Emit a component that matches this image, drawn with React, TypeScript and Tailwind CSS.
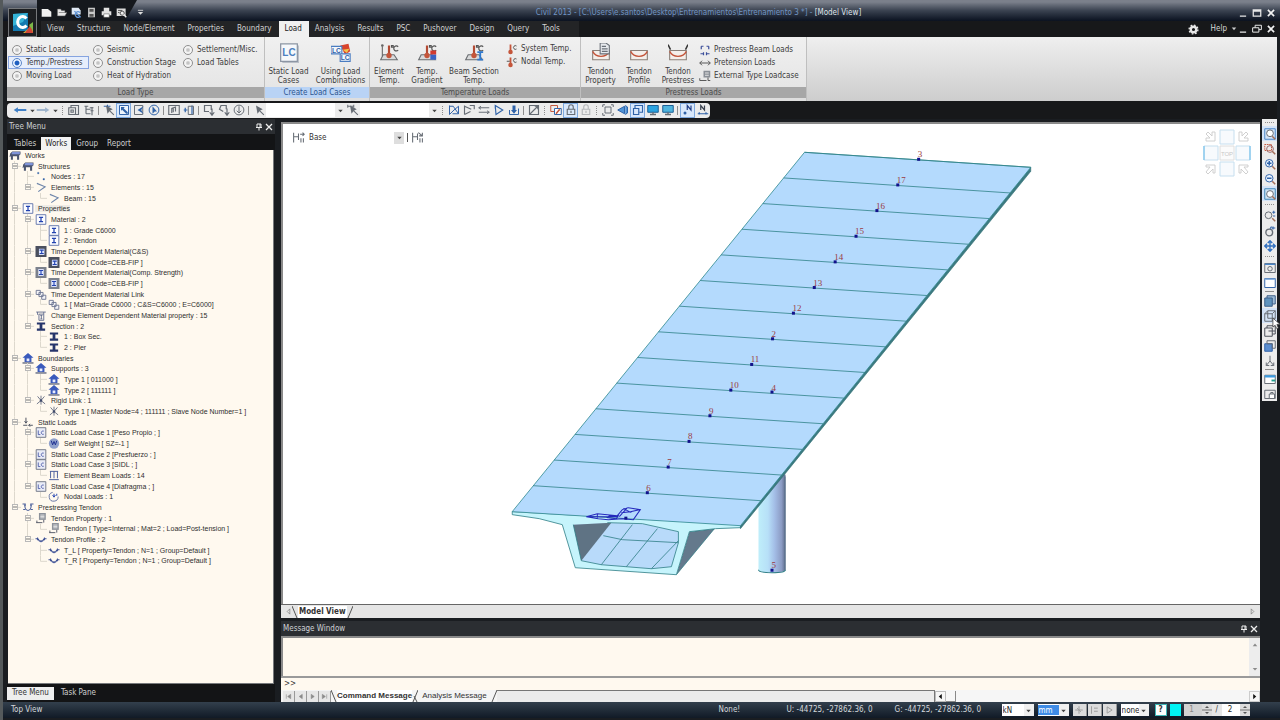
import { useState } from "react";
import type { ReactNode } from "react";
import clsx from "clsx";

const UI = "font-['DejaVu_Sans_Condensed','DejaVu_Sans',sans-serif]";
const ARIAL = "font-['Liberation_Sans',sans-serif]";

const B = "#2f62a8"; // blue ink used by most toolbar icons
const G = "#666c74"; // grey ink
const R = "#c4553a"; // tendon / temperature red

function Ico({ children, className = "h-[13px] w-[13px]", box = "0 0 16 16" }: { children: ReactNode; className?: string; box?: string }) {
  return (
    <svg viewBox={box} className={clsx("shrink-0", className)} fill="none" strokeWidth="1.3" aria-hidden="true">
      {children}
    </svg>
  );
}

/* ---------- title bar ---------- */

const QUICK: { label: string; icon: ReactNode }[] = [
  { label: "New", icon: <path d="M1 3h9l5 4v7H1z" fill="#f1f1f1" /> },
  { label: "Open", icon: <path d="M2 13V3h5l1 2h5v3h3l-3 5z M4 8h11" fill="#e8e8e8" stroke="#555" strokeWidth="0.8" /> },
  {
    label: "Open recent",
    icon: (
      <>
        <path d="M1 1h10l3 4v6H1z" fill="#dfe8f4" />
        <path d="M5 6l9 9M13 8a4 4 0 1 0 0 6" stroke="#5f93d4" strokeWidth="1.8" />
      </>
    ),
  },
  {
    label: "Save",
    icon: (
      <>
        <path d="M3 1h10v14H3z" fill="#c9c9c9" />
        <path d="M5 3h6v4H5zM5 10h6v4H5z" fill="#555" />
      </>
    ),
  },
  {
    label: "Print",
    icon: (
      <>
        <path d="M4 1h8v5H4zM1 6h14v6H1z" fill="#e2e2e2" />
        <path d="M4 10h8v5H4z" fill="#fff" stroke="#555" strokeWidth="0.8" />
      </>
    ),
  },
  {
    label: "Preview",
    icon: (
      <>
        <path d="M1 2h13v11H1z" fill="#ddd" />
        <path d="M3 5h6M3 8h2" stroke="#444" />
        <circle cx="9" cy="9" r="3" fill="#eee" stroke="#444" />
        <path d="M11 11l4 4" stroke="#eee" strokeWidth="2" />
      </>
    ),
  },
];

function WindowButtons({ restore }: { restore?: boolean }) {
  return (
    <div className="flex items-center gap-[3px]">
      <button type="button" aria-label="Minimize" className="flex h-3 w-[11px] items-center justify-center">
        <Ico className="h-[10px] w-[10px]">
          <path d="M3 13h10" stroke="#e8e8e8" strokeWidth="2" />
        </Ico>
      </button>
      <button type="button" aria-label="Restore" className="flex h-3 w-[11px] items-center justify-center">
        <Ico className="h-[10px] w-[10px]">
          {restore ? (
            <path d="M5 6V2h10v7h-4M1 6h10v7H1z" stroke="#e8e8e8" strokeWidth="1.6" />
          ) : (
            <path d="M2 3h12v10H2zM2 5h12" stroke="#e8e8e8" strokeWidth="2" />
          )}
        </Ico>
      </button>
      <button type="button" aria-label="Close" className="flex h-3 w-[11px] items-center justify-center">
        <Ico className="h-[10px] w-[10px]">
          <path d="M3 3l10 10M13 3L3 13" stroke="#f2f2f2" strokeWidth="2.6" />
        </Ico>
      </button>
    </div>
  );
}

const MENU = ["View", "Structure", "Node/Element", "Properties", "Boundary", "Load", "Analysis", "Results", "PSC", "Pushover", "Design", "Query", "Tools"];

function Header() {
  return (
    <header className="relative">
      <div className="flex h-[21px] items-center bg-linear-to-b from-[#7b808b] from-10% via-[#3b4351] via-50% to-[#0b1220] pr-1 pl-[34px]">
        <div className="flex h-full w-[100px] items-center gap-[2px] bg-[#15181d] pt-1 pl-[3px] [clip-path:polygon(0_0,100%_0,88%_100%,0_100%)]">
          {QUICK.map((q) => (
            <button key={q.label} type="button" aria-label={q.label} className="flex w-[13px] justify-center">
              <Ico className="h-[11px] w-[11px]">{q.icon}</Ico>
            </button>
          ))}
        </div>
        <button type="button" aria-label="Customize" className="pt-1">
          <Ico className="h-[7px] w-[7px]">
            <path d="M2 3h12" stroke="#ddd" strokeWidth="2" />
            <path d="M2 7h12l-6 6z" fill="#ddd" />
          </Ico>
        </button>
        <h1 className="flex-1 truncate pt-1 pl-4 text-center text-[8px] text-[#dfe3ea]">
          <span className="text-[#7195c4]">Civil 2013 - [C:\Users\e.santos\Desktop\Entrenamientos\Entrenamiento 3 *] -</span> [Model View]
        </h1>
        <div className="pt-1">
          <WindowButtons />
        </div>
      </div>

      <div className="flex h-4 items-center justify-between bg-[#17181a] pr-1 pl-[38px]">
        <nav className="flex h-full bg-[#232426] pr-3">
          {MENU.map((m) => (
            <button
              key={m}
              type="button"
              className={clsx("h-full pr-[7px] pl-[6px] text-[8px]", m === "Load" ? "bg-[#f0f0f0] text-[#222]" : "text-[#d2d2d2]")}
            >
              {m}
            </button>
          ))}
        </nav>
        <div className="flex items-center gap-1 text-[8px] text-[#d8d8d8]">
          <button type="button" aria-label="Options" className="mr-2">
            <Ico className="h-[11px] w-[11px]">
              <circle cx="8" cy="8" r="4" stroke="#e8e8e8" strokeWidth="3.4" />
              <circle cx="8" cy="8" r="6.4" stroke="#e8e8e8" strokeWidth="2" strokeDasharray="2.5 2.5" />
            </Ico>
          </button>
          <div className="flex items-center">
            <button type="button" className="flex items-center gap-1">
              Help
              <Ico className="h-[6px] w-[6px]">
                <path d="M2 4h12l-6 7z" fill="#ccc" />
              </Ico>
            </button>
            <WindowButtons restore />
          </div>
        </div>
      </div>

      {/* application button */}
      <button type="button" aria-label="Application menu" className="absolute top-2 left-[5px] flex h-[29px] w-[29px] items-center justify-center border border-[#77797c] bg-[#1d1f22]">
        <svg viewBox="0 0 24 24" className="h-6 w-6" aria-hidden="true">
          <path d="M2 3l15-1v18L2 20z" fill="#1379b0" />
          <path d="M2 3l15-1-5 9-10 4z" fill="#35b3d6" />
          <path d="M12 22l10-8v8z" fill="#d6b93a" />
          <path d="M14 22l6-9 2 9z" fill="#cf4436" />
          <path d="M18 14l4-3v9z" fill="#7cb648" />
          <path d="M15.500 7.500A5 5.500 0 1 0 15.500 14.500" fill="none" stroke="#fff" strokeWidth="3" />
        </svg>
      </button>
    </header>
  );
}

/* ---------- ribbon ---------- */

const LOAD_TYPES = [
  ["Static Loads", "Temp./Prestress", "Moving Load"],
  ["Seismic", "Construction Stage", "Heat of Hydration"],
  ["Settlement/Misc.", "Load Tables"],
];

const thermo = (
  <>
    <path d="M2 20l3-6h13l4 6z" fill="#d9dadb" stroke="#6a6d70" />
    <path d="M12 3v11" stroke="#b34a33" strokeWidth="2.6" />
    <circle cx="12" cy="15" r="3.2" fill="#c4553a" />
    <path d="M15 3h2v2h-2zM23 4.500a3 3 0 1 0 0 4" stroke="#555" strokeWidth="1.400" />
  </>
);

const tendonBox = (
  <>
    <path d="M2 9h20v11H2z" fill="#f4efea" stroke="#8a8078" />
    <path d="M2 10c4 8 16 8 20 0" stroke={R} strokeWidth="1.600" />
  </>
);

function LcBadge() {
  return (
    <>
      <path d="M2 1h20v21H2z" fill="#f6f8fb" stroke="#8c95a3" strokeWidth="1.500" />
      <path d="M23.500 3v20.500H4" stroke="#b9bec6" />
      <text x="12" y="16" textAnchor="middle" fontSize="12" fill="#4d80c0" fontFamily="Liberation Sans" fontWeight="700">
        LC
      </text>
    </>
  );
}

function BigButton({ lines, icon, width }: { lines: [string, string]; icon: ReactNode; width: string }) {
  return (
    <button type="button" className={clsx("flex flex-col items-center pt-[6px] text-[8px] leading-[9px] text-[#3c3c3c]", width)}>
      <Ico className="h-5 w-5" box="0 0 24 24">
        {icon}
      </Ico>
      <span className="mt-1 whitespace-nowrap">{lines[0]}</span>
      <span className="whitespace-nowrap">{lines[1]}</span>
    </button>
  );
}

function SmallButton({ label, icon }: { label: string; icon: ReactNode }) {
  return (
    <button type="button" className="flex h-[13px] items-center gap-[3px] text-[8px] whitespace-nowrap text-[#3c3c3c]">
      <Ico className="h-3 w-3">{icon}</Ico>
      {label}
    </button>
  );
}

function RibbonGroup({ title, active, children }: { title: string; active?: boolean; children: ReactNode }) {
  return (
    <section className="flex flex-col border-r border-[#bfbfbf]">
      <div className="flex h-[50px] bg-linear-to-b from-[#f0f0f0] to-[#e6e6e6]">{children}</div>
      <h2 className={clsx("h-[11px] text-center text-[8px] leading-[11px]", active ? "bg-[#b9d3f5] text-[#2c5590]" : "bg-[#a7a7a7] text-[#4a4a4a]")}>{title}</h2>
      <div className="flex-1 bg-[#dedede]" />
    </section>
  );
}

function Ribbon() {
  const [type, setType] = useState("Temp./Prestress");

  return (
    <div className="flex h-16 overflow-hidden bg-linear-to-b from-[#efefef] to-[#cdcdcd]">
      <RibbonGroup title="Load Type">
        <fieldset className="flex w-[257px] pt-[6px] pl-px">
          {LOAD_TYPES.map((col, i) => (
            <div key={i} className={clsx("flex flex-col", i === 0 ? "w-[81px]" : i === 1 ? "w-[90px]" : "w-[84px]")}>
              {col.map((name) => (
                <label
                  key={name}
                  className={clsx(
                    "flex h-[13px] items-center gap-1 border px-[3px] text-[8px] whitespace-nowrap text-[#3c3c3c]",
                    type === name ? "border-[#86a4e0] bg-[#e6eefc]" : "border-transparent"
                  )}
                >
                  <input
                    type="radio"
                    name="load-type"
                    checked={type === name}
                    onChange={() => setType(name)}
                    className="h-[10px] w-[10px] shrink-0 appearance-none rounded-full border border-[#8f8f8f] bg-[radial-gradient(circle,#c4c4c4_20%,#f4f4f4_45%)] checked:border-[#5c87c8] checked:bg-[radial-gradient(circle,#1f5fc0_35%,#e8f1ff_50%)]"
                  />
                  {name}
                </label>
              ))}
            </div>
          ))}
        </fieldset>
      </RibbonGroup>

      <RibbonGroup title="Create Load Cases" active>
        <BigButton width="w-[47px]" lines={["Static Load", "Cases"]} icon={<LcBadge />} />
        <BigButton
          width="w-[57px]"
          lines={["Using Load", "Combinations"]}
          icon={
            <>
              <path d="M11 3l10-2 2 9-6 4z" fill="#d8432c" />
              <path d="M14 8l8-1-3 5z" fill="#f2c14b" />
              <path d="M0 4h13v9H0zM11 13h12v9H11z" fill="#f4f7fb" stroke="#4a7cc0" />
              <text x="6.500" y="11.500" textAnchor="middle" fontSize="8" fontWeight="700" fill={B} fontFamily="Liberation Sans">
                LC
              </text>
              <text x="17" y="20.500" textAnchor="middle" fontSize="8" fontWeight="700" fill={B} fontFamily="Liberation Sans">
                LC
              </text>
            </>
          }
        />
      </RibbonGroup>

      <RibbonGroup title="Temperature Loads">
        <BigButton
          width="w-[38px]"
          lines={["Element", "Temp."]}
          icon={
            <>
              {thermo}
              <path d="M4 4v12" stroke="#666" />
              <circle cx="4" cy="3" r="1.600" fill="#666" />
            </>
          }
        />
        <BigButton
          width="w-[38px]"
          lines={["Temp.", "Gradient"]}
          icon={
            <>
              {thermo}
              <path d="M16 9h7v5h-7z" fill="#d23a30" />
              <path d="M16 14h7v6h-7z" fill="#3a62c4" />
            </>
          }
        />
        <BigButton
          width="w-[56px]"
          lines={["Beam Section", "Temp."]}
          icon={
            <>
              {thermo}
              <path d="M16 11h7M16 20h7M19.500 11v9" stroke="#2f79cf" strokeWidth="2.200" />
            </>
          }
        />
        <div className="flex w-[78px] flex-col pt-[5px] pl-1">
          <SmallButton
            label="System Temp."
            icon={
              <>
                <path d="M6 2v9" stroke={R} strokeWidth="2.400" />
                <circle cx="6" cy="12" r="3" fill={R} />
                <path d="M14 4a2.500 2.500 0 1 0 0 4" stroke="#555" />
              </>
            }
          />
          <SmallButton
            label="Nodal Temp."
            icon={
              <>
                <path d="M6 2v9" stroke={R} strokeWidth="2.400" />
                <circle cx="6" cy="12" r="3" fill={R} />
                <path d="M1 7h4M14 4a2.500 2.500 0 1 0 0 4" stroke="#555" />
              </>
            }
          />
        </div>
      </RibbonGroup>

      <RibbonGroup title="Prestress Loads">
        <BigButton
          width="w-[39px]"
          lines={["Tendon", "Property"]}
          icon={
            <>
              {tendonBox}
              <path d="M11 0h7l4 3v10H11z" fill="#e6e9ed" stroke="#6a7078" />
              <path d="M13 4h5M13 7h7M13 10h7" stroke="#6a7078" />
            </>
          }
        />
        <BigButton width="w-[38px]" lines={["Tendon", "Profile"]} icon={tendonBox} />
        <BigButton
          width="w-10"
          lines={["Tendon", "Prestress"]}
          icon={
            <>
              {tendonBox}
              <path d="M3 8L0 2M21 8l3-6" stroke="#333" strokeWidth="1.800" />
            </>
          }
        />
        <div className="flex w-[108px] flex-col pt-[6px] pl-px">
          <SmallButton
            label="Prestress Beam Loads"
            icon={<path d="M3 3v4M3 3h3M13 3v4M13 3h-3M2 13h4M14 13h-4M6 11v4M10 11v4" stroke="#3b4e9a" strokeWidth="1.600" />}
          />
          <SmallButton label="Pretension Loads" icon={<path d="M1 8h14M4 5L1 8l3 3M12 5l3 3-3 3" stroke="#555" />} />
          <SmallButton
            label="External Type Loadcase"
            icon={
              <>
                <path d="M6 1h9v9H6z" fill="#8a8f96" />
                <path d="M8 4h5M8 7h5" stroke="#e6e6e6" />
                <path d="M1 14h9M12 10v4h3M1 11v3" stroke="#555" />
              </>
            }
          />
        </div>
      </RibbonGroup>
    </div>
  );
}

/* ---------- icon toolbar ---------- */

const cursor = <path d="M4 2l2 11 2.500-3.500L14 15l1-1-5.500-5.500L13 7z" fill={G} />;

type Tool = { kind: "icon"; label: string; icon: ReactNode; active?: boolean } | { kind: "sep" } | { kind: "grip" } | { kind: "select"; label: string };

const SEP: Tool = { kind: "sep" };
const GRIP: Tool = { kind: "grip" };
const t = (label: string, icon: ReactNode, active = false): Tool => ({ kind: "icon", label, icon, active });

const TOOLS: Tool[] = [
  GRIP,
  t("Select by property", <path d="M1 5h9v9H1zM4 5V2h10v12h-4M4 8h3v3H4z" stroke={G} strokeWidth="1.500" />),
  t("Group tree", <path d="M2 3h5M4 3v10M4 7h6M4 13h6M12 4v11M9 5h5M10 9h4" stroke={G} strokeWidth="1.500" />),
  SEP,
  t("Select single", <><path d="M1 3h9M6 1v6" stroke={B} />{cursor}</>),
  t("Select window", <><path d="M2 2h12v12H2z" fill="#eef5fd" stroke={B} /><path d="M4 4h5L7.500 5.500 13 11v2h-2L5.500 7.500 4 9z" fill={B} /></>, true),
  t("Select polygon", <><path d="M2 2h11v12H2z" stroke={G} /><path d="M14 3L6 8l8 5-3-5z" fill={B} /></>),
  t("Select intersect", <><circle cx="8" cy="8" r="6.500" stroke={B} /><path d="M6 3l6 7H9l-3 3z" fill={B} /></>),
  SEP,
  t("Select plane", <path d="M1 2h14v12H1zM5 12V6l5-2v6M7 5v6" stroke={G} strokeWidth="1.500" />),
  t("Select volume", <><path d="M1 8h5M3 5v6M12 2v12" stroke={B} strokeWidth="1.600" /><path d="M7 3h7v11H7z" stroke={G} /></>),
  SEP,
  t("Unselect window", <path d="M8 10H2V2h9v6M12 6v8M9 11l3 4 3-4" stroke={G} strokeWidth="1.600" />),
  t("Unselect polygon", <path d="M7 10L2 7l2-5h7v5M12 6v8M9 11l3 4 3-4" stroke={G} strokeWidth="1.600" />),
  t("Unselect intersect", <><circle cx="8" cy="8" r="6.500" stroke={G} /><path d="M8 3v9M5 9l3 3 3-3" stroke={G} /></>),
  SEP,
  t("Select nodes", cursor),
  { kind: "select", label: "Node list" },
  t("Select elements", <><path d="M1 3h8M1 1v4M9 1v4" stroke={G} />{cursor}</>),
  { kind: "select", label: "Element list" },
  GRIP,
  t("Activate", <path d="M2 2v12M2 14l6-6 6-5M14 3v10H6M2 3h5l7 10" stroke={B} />),
  t("Inactivate", <path d="M2 2v12M2 14l8-4M2 3l9 4M9 2h6v5" stroke={G} strokeWidth="1.500" />),
  t("Inverse", <path d="M1 5h14M1 11h14M4 3L1 5l3 2M12 9l3 2-3 2" stroke={G} />),
  t("Activate all", <path d="M3 2l10 6-9 6zM3 2v4" stroke={B} strokeWidth="1.500" />),
  t("Previous", <><path d="M2 8v6h12V6" stroke={B} /><path d="M4 8l4 5 4-5-2 0V2H6v6z" fill={B} /></>),
  SEP,
  t("Redraw", <path d="M2 2h12v12H2zM2 14L14 2M9 3h4v4" stroke={G} strokeWidth="1.500" />),
  GRIP,
  t("Stage", <><path d="M1 2h9v8H1z" stroke={R} /><path d="M6 6h9v8H6z" fill="#fff" stroke={B} /><path d="M8 13l5-6" stroke={R} strokeWidth="2" /></>),
  t("Lock", <path d="M3 7h10v7H3zM5 7V4a3 3 0 0 1 6 0v3M8 9v3" stroke={G} strokeWidth="1.500" />, true),
  t("Unlock", <path d="M3 7h10v7H3zM5 7V4a3 3 0 0 1 6 0v3M8 9v3" stroke="#b4b6b9" strokeWidth="1.500" />),
  GRIP,
  t("Initial view", <path d="M4 4h8v8H4zM1 4V1h3M12 1h3v3M15 12v3h-3M4 15H1v-3" stroke={G} />),
  t("Perspective", <path d="M1 8l9-5v10zM11 2l3 2v8l-3 2" fill="#4f93d6" stroke={B} />),
  t("Shrink", <path d="M4 6V2h10v9h-4M2 6h7v8H2z" stroke={B} strokeWidth="1.500" />, true),
  t("Hidden", <><path d="M1 2h14v9H1z" fill="#2aa3e0" stroke="#1a5b92" /><path d="M4 14h8M8 11v3" stroke={G} strokeWidth="1.800" /></>),
  t("Display", <><path d="M1 2h14v9H1z" fill="#4fb4dd" stroke="#1a5b92" /><path d="M4 14h8M8 11v3" stroke={G} strokeWidth="1.800" /></>),
  SEP,
  t("Node number", <><path d="M7 8V2l5 6V2" stroke="#23408a" strokeWidth="1.600" /><circle cx="4" cy="12" r="2" fill={B} /></>, true),
  t("Element number", <><path d="M5 8V2l5 6V2" stroke="#3a4250" strokeWidth="1.600" /><path d="M1 13h14M3 11v3M12 11v3" stroke={B} strokeWidth="1.600" /></>),
];

function Caret() {
  return (
    <Ico className="h-[7px] w-[7px]" box="0 0 8 8">
      <path d="M1.500 3h5L4 6z" fill="#444" />
    </Ico>
  );
}

function NavArrow({ label, dir, color }: { label: string; dir: "l" | "r"; color: string }) {
  return (
    <button type="button" aria-label={label} className="flex w-[23px] items-center gap-[2px]">
      <Ico className="h-[10px] w-[14px]" box="0 0 20 12">
        <path d={dir === "l" ? "M1 6l6-4v2.500h12v3H7V10z" : "M19 6l-6-4v2.500H1v3h12V10z"} fill={color} />
      </Ico>
      <Caret />
    </button>
  );
}

function Toolbar() {
  return (
    <div className="flex h-[18px] bg-[#17181a]">
      <div className="flex h-[15px] items-center self-center rounded-sm bg-[#ececec] pl-[6px]">
        <NavArrow label="Undo" dir="l" color="#3f7fc6" />
        <NavArrow label="Redo" dir="r" color="#9fb4cc" />
        {TOOLS.map((x, i) => {
          if (x.kind === "sep") return <span key={i} className="mx-[2px] h-[9px] w-px bg-[#8d8d8d]" />;
          if (x.kind === "grip") return <span key={i} className="mx-[3px] h-[9px] w-px border-l border-dotted border-[#8d8d8d]" />;
          if (x.kind === "select")
            return (
              <span key={i} className="relative flex h-[14px] w-[79px] items-center">
                <select aria-label={x.label} className="h-full w-full appearance-none bg-white text-[8px]" />
                <span className="pointer-events-none absolute right-0 flex h-full w-[10px] items-center justify-center bg-[#ececec]">
                  <Caret />
                </span>
              </span>
            );
          return (
            <button
              key={i}
              type="button"
              aria-label={x.label}
              className={clsx("flex h-[15px] w-[15px] items-center justify-center", x.active && "border border-[#7fa9de] bg-[#d9e8fb]")}
            >
              <Ico className="h-3 w-3">{x.icon}</Ico>
            </button>
          );
        })}
      </div>
    </div>
  );
}

/* ---------- tree panel ---------- */

const treeIcons: Record<string, ReactNode> = {
  works: (
    <>
      <path d="M1 5l3-3h12v4l-2 2v6h-3V9H5v5H2V9L0 10z" fill="#4b5570" />
      <path d="M4 3h11v3H3z" fill="#7f93d8" />
    </>
  ),
  nodes: <path d="M3 2h2v2H3zM11 11h2v2h-2z" fill={B} stroke={B} strokeWidth="0.500" />,
  elements: <path d="M2 2l12 5-10 7" stroke="#6f86ab" strokeWidth="1.600" />,
  mat: (
    <>
      <path d="M1 1h14v14H1z" fill="#fdfdff" stroke="#5b6fa8" />
      <path d="M5 5h6M5 11h6M8 5v6" stroke="#2343b0" strokeWidth="1.800" />
    </>
  ),
  matDark: (
    <>
      <path d="M0 0h16v16H0z" fill="#4a4f5e" />
      <path d="M5 4h8v9H5z" fill="#dfe6ff" />
      <path d="M6 6h6M6 11h6M9 6v5" stroke="#2343b0" strokeWidth="1.600" />
    </>
  ),
  matMid: (
    <>
      <path d="M0 0h16v16H0z" fill="#7c818c" />
      <path d="M4 3h8v10H4z" fill="#dfe6ff" />
      <path d="M5 5h6M5 11h6M8 5v6" stroke="#2343b0" strokeWidth="1.600" />
    </>
  ),
  link: <path d="M1 2h6v6H1zM5 5h6v6H5zM9 9h6v6H9z" fill="#f4f4f8" stroke="#6b7490" />,
  change: <path d="M1 3h14M3 3v4M12 3v3M5 6h7v9H5zM7 8h3M7 13h3M8.500 8v5" stroke="#5f6a8c" />,
  section: <path d="M2 2h12v3H10v6h4v3H2v-3h4V5H2z" fill="#26356b" />,
  support: (
    <>
      <path d="M8 0l8 7h-3v6H3V7H0z" fill="#3a5abc" />
      <path d="M6 8h4v4H6z" fill="#e8edff" />
      <path d="M0 14.500h16" stroke="#3a4466" strokeWidth="1.600" />
    </>
  ),
  rigid: (
    <>
      <path d="M8 8L3 2M8 8l5-6M8 8l-6 5M8 8l6 5M8 8V1M8 8v6" stroke="#59617a" strokeWidth="1.200" />
      <circle cx="8" cy="8" r="1.800" fill="#3f4a6a" />
    </>
  ),
  loads: <path d="M5 1v7M3 6l2 3 2-3M1 12h6M15 12H9M11 10l-2 2 2 2" stroke="#4a4f5e" strokeWidth="1.400" />,
  lc: (
    <>
      <path d="M1 1h14v14H1z" fill="#e9ebf6" stroke="#6a7080" />
      <path d="M4 5v6h3M12 6a2.500 2.500 0 1 0 0 4.500" stroke="#4a5aa8" strokeWidth="1.300" />
    </>
  ),
  weight: (
    <>
      <circle cx="8" cy="8" r="7.500" fill="#8fa0cc" />
      <path d="M4 4l2 6 2-5 2 5 2-6" stroke="#1e2f90" strokeWidth="1.400" />
    </>
  ),
  beam: <path d="M2 2h12M3 2v10M8 2v10M13 2v10M1 14h14" stroke="#4c5f9c" strokeWidth="1.400" />,
  nodal: (
    <>
      <path d="M6 2a6.500 6.500 0 1 0 8 6" stroke="#5a6ba0" />
      <path d="M8 4v4M6 6l2 3 2-3M12 4v3" stroke="#2343b0" strokeWidth="1.400" />
    </>
  ),
  tendon: <path d="M0 3h4v3M16 3h-4v3M3 4c1 11 9 11 10 0M1 11h3M12 11h3" stroke="#4b5f9a" strokeWidth="1.500" />,
  tprop: (
    <>
      <path d="M5 0h10v10H5z" fill="#8d929b" />
      <path d="M7 3h6M7 5h6M7 7h6" stroke="#e8e8e8" />
      <path d="M1 14h9M2 11v3M12 10v4" stroke="#4a4f5e" />
    </>
  ),
  tprof: <path d="M0 7h4M12 7h4M3 5v4M13 5v4M4 7c1 5 7 5 8 0M8 9v3" stroke="#3f5296" strokeWidth="1.500" />,
};

type Row = { level: number; text: string; icon: string; open?: boolean };

const ROWS: Row[] = [
  { level: 0, text: "Works", icon: "works" },
  { level: 1, text: "Structures", icon: "works", open: true },
  { level: 2, text: "Nodes : 17", icon: "nodes" },
  { level: 2, text: "Elements : 15", icon: "elements", open: true },
  { level: 3, text: "Beam : 15", icon: "elements" },
  { level: 1, text: "Properties", icon: "mat", open: true },
  { level: 2, text: "Material : 2", icon: "mat", open: true },
  { level: 3, text: "1 : Grade C6000", icon: "mat" },
  { level: 3, text: "2 : Tendon", icon: "mat" },
  { level: 2, text: "Time Dependent Material(C&S)", icon: "matDark", open: true },
  { level: 3, text: "C6000 [ Code=CEB-FIP ]", icon: "matDark" },
  { level: 2, text: "Time Dependent Material(Comp. Strength)", icon: "matMid", open: true },
  { level: 3, text: "C6000 [ Code=CEB-FIP ]", icon: "matMid" },
  { level: 2, text: "Time Dependent Material Link", icon: "link", open: true },
  { level: 3, text: "1 [ Mat=Grade C6000 ; C&S=C6000 ; E=C6000]", icon: "link" },
  { level: 2, text: "Change Element Dependent Material property : 15", icon: "change" },
  { level: 2, text: "Section : 2", icon: "section", open: true },
  { level: 3, text: "1 : Box Sec.", icon: "section" },
  { level: 3, text: "2 : Pier", icon: "section" },
  { level: 1, text: "Boundaries", icon: "support", open: true },
  { level: 2, text: "Supports : 3", icon: "support", open: true },
  { level: 3, text: "Type 1 [ 011000 ]", icon: "support" },
  { level: 3, text: "Type 2 [ 111111 ]", icon: "support" },
  { level: 2, text: "Rigid Link : 1", icon: "rigid", open: true },
  { level: 3, text: "Type 1 [ Master Node=4 ; 111111 ; Slave Node Number=1 ]", icon: "rigid" },
  { level: 1, text: "Static Loads", icon: "loads", open: true },
  { level: 2, text: "Static Load Case 1 [Peso Propio ; ]", icon: "lc", open: true },
  { level: 3, text: "Self Weight [ SZ=-1 ]", icon: "weight" },
  { level: 2, text: "Static Load Case 2 [Presfuerzo ; ]", icon: "lc" },
  { level: 2, text: "Static Load Case 3 [SIDL ; ]", icon: "lc", open: true },
  { level: 3, text: "Element Beam Loads : 14", icon: "beam" },
  { level: 2, text: "Static Load Case 4 [Diafragma ; ]", icon: "lc", open: true },
  { level: 3, text: "Nodal Loads : 1", icon: "nodal" },
  { level: 1, text: "Prestressing Tendon", icon: "tendon", open: true },
  { level: 2, text: "Tendon Property : 1", icon: "tprop", open: true },
  { level: 3, text: "Tendon [ Type=Internal ; Mat=2 ; Load=Post-tension ]", icon: "tprop" },
  { level: 2, text: "Tendon Profile : 2", icon: "tprof", open: true },
  { level: 3, text: "T_L [ Property=Tendon ; N=1 ; Group=Default ]", icon: "tprof" },
  { level: 3, text: "T_R [ Property=Tendon ; N=1 ; Group=Default ]", icon: "tprof" },
];

// true when a later sibling sits at this level below row i
function continues(i: number, level: number) {
  for (let j = i + 1; j < ROWS.length; j++) {
    if (ROWS[j].level < level) return false;
    if (ROWS[j].level === level) return true;
  }
  return false;
}

function Guide({ index, level }: { index: number; level: number }) {
  const row = ROWS[index];
  const own = row.level === level;
  const more = continues(index, level);
  return (
    <svg className="h-full w-[13px] shrink-0" stroke="#ddd8cd" aria-hidden="true">
      {(own || more) && <line x1="6.500" x2="6.500" y1="0" y2={more ? "100%" : "50%"} />}
      {own && <line x1="6.500" x2="13" y1="50%" y2="50%" />}
      {own && row.open && (
        <>
          <rect x="4.500" y="2.500" width="5" height="5" fill="#fffaf0" stroke="#b9b9b9" />
          <path d="M5 5h4" stroke="#777" />
        </>
      )}
    </svg>
  );
}

function PanelTitle({ children }: { children: ReactNode }) {
  return (
    <div className="flex h-[15px] items-center justify-between bg-[#2b2e32] px-[2px] text-[8px] text-[#cfd1d4]">
      <h2>{children}</h2>
      <div className="flex gap-[2px]">
        <button type="button" aria-label="Pin">
          <Ico className="h-2 w-2">
            <path d="M4 2h8v7H4zM2 9h12M8 9v6M10 2v7" stroke="#eee" strokeWidth="2" />
          </Ico>
        </button>
        <button type="button" aria-label="Close">
          <Ico className="h-2 w-2">
            <path d="M2 2l12 12M14 2L2 14" stroke="#eee" strokeWidth="2.600" />
          </Ico>
        </button>
      </div>
    </div>
  );
}

function TreePanel() {
  const [tab, setTab] = useState("Works");

  return (
    <aside className="flex w-[268px] shrink-0 flex-col">
      <PanelTitle>Tree Menu</PanelTitle>
      <div className="flex h-4 items-end gap-px bg-[#131416] pl-[3px]">
        {["Tables", "Works", "Group", "Report"].map((name) => (
          <button
            key={name}
            type="button"
            onClick={() => setTab(name)}
            className={clsx("h-[13px] px-1 text-[8px]", tab === name ? "bg-[#f2f2f2] text-[#222]" : "text-[#cfcfcf]")}
          >
            {name}
          </button>
        ))}
      </div>
      <div className="mx-px flex-1 overflow-hidden border-r border-b border-[#77797c] bg-[#fff9ef]">
        <ul className={clsx("flex h-[416px] flex-col text-[7px] leading-none text-[#2e2e2e]", ARIAL)}>
          {ROWS.map((row, i) => (
            <li key={i} className="flex min-h-0 flex-1 items-center whitespace-nowrap">
              {Array.from({ length: row.level }, (_, n) => (
                <Guide key={n} index={i} level={n + 1} />
              ))}
              <Ico className="mx-px h-[11px] w-3">{treeIcons[row.icon]}</Ico>
              <span className={clsx("pl-[3px]", row.text === "Properties" && "bg-[#efece6]")}>{row.text}</span>
            </li>
          ))}
        </ul>
      </div>
      <div className="flex h-[18px] items-center bg-[#131416] text-[8px]">
        <button type="button" className="h-[13px] bg-[#eeeeee] px-[5px] text-[#333]">
          Tree Menu
        </button>
        <button type="button" className="px-[7px] text-[#cfcfcf]">
          Task Pane
        </button>
      </div>
    </aside>
  );
}

/* ---------- model view ---------- */

const NODES = [3, 17, 16, 15, 14, 13, 12, 2, 11, 10, 9, 8, 7, 6];
const DX = 20.85;
const DY = 25.62;

function BridgeModel() {
  return (
    <svg viewBox="284 124 976 479" className="block h-full w-full" role="img" aria-label="Bridge model">
      <defs>
        <linearGradient id="pier" x1="0" x2="1" y1="0" y2="0">
          <stop offset="0" stopColor="#bfeefa" />
          <stop offset="0.350" stopColor="#b7e0f8" />
          <stop offset="0.600" stopColor="#a3bde6" />
          <stop offset="0.850" stopColor="#8c9cc4" />
          <stop offset="1" stopColor="#5f6d8c" />
        </linearGradient>
      </defs>

      {/* pier */}
      <path d="M759 480v89c0 4 27 4 27 0v-95h-16z" fill="url(#pier)" />
      <path d="M759 569c0 4 27 4 27 0" fill="none" stroke="#2f7e86" />
      <path d="M785.500 476v93" stroke="#56708c" />

      {/* box girder end section */}
      <path d="M690 531l25-3-38 46z" fill="#64798c" />
      <path d="M690 531l25-3-38 46" fill="none" stroke="#2f7e86" strokeWidth="0.700" />
      <path d="M513 511v3l27 4 23 6 13 43 101 7 13-43 26-3 25-1v-3z" fill="#c6f4fc" stroke="#2f7e86" strokeWidth="0.800" />
      <path d="M574 524l37-2 32 1 36 8 0 11-7 24-20 2-50-4-20-4z" fill="#b8dafa" />
      <path d="M574 524l38-2-30 38z" fill="#5f7384" />
      <path
        d="M574 524l8 36 20 4 50 4 20-2 7-24v-11M602 564l31-40M627 566l31-38M652 568l27-28M604 535l19 4 56 3M608 522l35 1 36 8"
        fill="none"
        stroke="#2f7e86"
        strokeWidth="0.800"
      />

      {/* deck */}
      <path d="M1031 167v4L741 528v-3z" fill="#3d7a80" stroke="#2f6f76" strokeWidth="0.600" />
      <path d="M805 152l226 15-290 358-228-14z" fill="#b4dafd" stroke="#2f8a90" strokeWidth="0.800" />
      {NODES.map((n, k) => (
        <line key={n} x1={805 - DX * k} y1={152 + DY * k} x2={1031 - 20.75 * k} y2={167 + DY * k} stroke="#2f8288" strokeWidth="0.800" />
      ))}

      {/* axes glyph */}
      <path
        d="M587 516l11-3 20 2 5-6 6-2 12 2-7 10-11-1-14 1-10-1zM587 516l32 0M598 513l0 4M608 517l2-2 9 0-2 3zM622 512l9-1 9-2M624 508l8 4M620 516l8-9"
        fill="none"
        stroke="#2428bc"
        strokeWidth="1"
      />
      <rect x="625" y="516" width="3" height="3" fill="#12128c" />

      <g fontFamily="Liberation Serif" fontSize="9" fill="#9a3a42">
        {NODES.map((n, k) => (
          <g key={n}>
            <rect x={917.5 - DX * k} y={157.500 + DY * k} width="3" height="3" fill="#12128c" />
            <text x={918 - DX * k} y={157 + DY * k}>
              {n}
            </text>
          </g>
        ))}
        <rect x="771" y="390" width="3" height="3" fill="#12128c" />
        <text x="772" y="390">
          4
        </text>
        <rect x="771" y="568" width="3" height="3" fill="#12128c" />
        <text x="772" y="567">
          5
        </text>
      </g>
    </svg>
  );
}

function ViewCube() {
  return (
    <svg viewBox="0 0 48 48" className="absolute top-[5px] right-[9px] h-12 w-12" aria-label="View cube" role="img" fill="none">
      <g fill="#f7fafd" stroke="#c6dfef">
        <path d="M17 1h14v14H17zM1 17h14v14H1zM33 17h14v14H33zM17 33h14v14H17z" />
        <path d="M17 17h14v14H17z" stroke="#dedede" fill="#fbfbfb" />
      </g>
      <path d="M1 17v14M47 17v14" stroke="#8ccaee" strokeWidth="1.500" />
      {/* outlined corner arrows: the upper pair points in, the lower pair too */}
      <g fill="#fff" stroke="#cbcbcb" strokeWidth="0.900">
        <path d="M3 5l2-2 4 4V3h3v9H3V9h4z" />
        <path d="M45 5l-2-2-4 4V3h-3v9h9V9h-4z" />
        <path d="M3 43l2 2 5-5v4h2v-8H3v2h4z" />
        <path d="M45 43l-2 2-5-5v4h-2v-8h9v2h-4z" />
      </g>
      <text x="24" y="26.500" textAnchor="middle" fontSize="6" fill="#c8c8c8" fontFamily="Liberation Sans">
        TOP
      </text>
    </svg>
  );
}

function StageBar() {
  return (
    <div className="absolute top-[7px] left-[9px] flex items-center text-[8px] text-[#333]">
      <Ico className="h-[13px] w-[13px]">
        <path d="M2 2v12M2 7h6M8 3v8M10 4h5M13 2l2 2-2 2M11 9v5M14 9v5" stroke={G} />
      </Ico>
      <span className="relative flex w-[99px] items-center">
        <select aria-label="Stage" className="w-full appearance-none bg-white pl-1">
          <option>Base</option>
        </select>
        <span className="pointer-events-none absolute right-0 flex h-3 w-[10px] items-center justify-center bg-[#dedede]">
          <Caret />
        </span>
      </span>
      <span className="mx-[3px] h-[9px] w-px bg-[#555]" />
      <button type="button" aria-label="Define stage">
        <Ico className="h-[13px] w-[13px]">
          <path d="M2 2v12M2 7h6M8 3v8M9 2l5 4M14 2v4h-4M11 9v5M14 9v5" stroke={G} />
        </Ico>
      </button>
    </div>
  );
}

/* ---------- right toolbar ---------- */

const lens = <path d="M11 11l4 4" stroke="#a4705a" strokeWidth="2" />;

const SIDE: Tool[] = [
  GRIP,
  t("Zoom fit", <><path d="M1 1h14v14H1z" stroke="#4a86c8" /><circle cx="8" cy="7" r="4.500" fill="#fff" stroke={G} />{lens}</>, true),
  t("Zoom window", <><path d="M1 2h9v8H1z" stroke={R} strokeDasharray="2 1" /><circle cx="8" cy="8" r="4.500" stroke="#9a6a6a" />{lens}</>),
  t("Zoom in", <><circle cx="7" cy="7" r="5" fill="#eaf4ff" stroke={B} /><path d="M4 7h6M7 4v6" stroke={B} strokeWidth="2" />{lens}</>),
  t("Zoom out", <><circle cx="7" cy="7" r="5" fill="#eaf4ff" stroke={B} /><path d="M4 7h6" stroke={B} strokeWidth="2" />{lens}</>),
  t("Auto fitting", <><path d="M1 1h14v14H1z" fill="#cfe3f4" stroke="#3f86b8" /><circle cx="8" cy="8" r="4.500" fill="#fff" stroke={G} />{lens}</>, true),
  GRIP,
  t("Dynamic zoom", <><circle cx="6" cy="7" r="4.500" stroke={G} /><path d="M11 3h4M13 1v4M12 8h3" stroke={B} />{lens}</>),
  t("Dynamic rotate", <><circle cx="7" cy="10" r="4.500" stroke={G} strokeWidth="1.800" /><path d="M8 5l2-3M12 2v4M10 4h5" stroke={B} strokeWidth="1.500" /></>),
  t("Pan", <path d="M8 1v14M1 8h14M5 4l3-3 3 3M5 12l3 3 3-3M4 5L1 8l3 3M12 5l3 3-3 3" stroke="#2f6fc0" strokeWidth="1.800" />),
  GRIP,
  t("Fast query", <><path d="M1 2h14v12H1z" stroke={G} /><path d="M1 2h14v2H1z" fill="#4a86c8" /><circle cx="8" cy="9" r="3" stroke={G} /></>),
  t("Top view", <><path d="M1 2h14v12H1z" fill="#fff" stroke={B} /><path d="M1 2h14v2H1z" fill="#8db4e0" /></>),
  SEP,
  t("Iso view", <><path d="M4 1h11v11H4z" fill="#9dbbd6" stroke="#3c5e86" /><path d="M1 4h10v11H1z" fill="#5f93bd" stroke="#3c5e86" /></>),
  t("Wireframe", <path d="M1 5h10v10H1zM1 5l4-4h10v10l-4 4M11 5l4-4M5 1v10h10" stroke={G} />, true),
  t("Front view", <path d="M1 4h10v11H1zM4 4V1h11v11h-4M6 8h9" stroke="#4a4f58" />),
  t("Back view", <><path d="M1 5h10v10H1z" fill="#5b8ed0" stroke={B} /><path d="M4 1h11v10h-4V5H4z" stroke={G} /></>),
  t("Local axis", <path d="M8 1v7M8 8l-5 6M8 8l5 6M3 10v4h4M13 10v4H9" stroke={G} />),
  SEP,
  t("Capture", <><path d="M1 3h14v11H1z" fill="#fff" stroke={G} /><path d="M1 3h14v3H1z" fill="#3b9be0" /><path d="M10 10h5" stroke="#23a08e" strokeWidth="2.500" /></>),
  t("Lock view", <><path d="M1 3h14v11H1z" stroke={G} /><path d="M7 8h7v6H7zM9 8V6h3v2" fill="#fff" stroke={G} /></>),
];

function SideToolbar() {
  return (
    <div className="relative flex w-[15px] shrink-0 flex-col">
      <div className="flex flex-col items-center bg-[#ececec]">
        {SIDE.map((x, i) => {
          if (x.kind === "sep") return <span key={i} className="my-px h-px w-[9px] bg-[#8d8d8d]" />;
          if (x.kind !== "icon") return <span key={i} className="my-[3px] h-px w-[9px] border-t border-dotted border-[#8d8d8d]" />;
          return (
            <button
              key={i}
              type="button"
              aria-label={x.label}
              className={clsx("flex h-[15px] w-[15px] items-center justify-center", x.active && "bg-[#d3e3f7]")}
            >
              <Ico className="h-3 w-3">{x.icon}</Ico>
            </button>
          );
        })}
      </div>
      {/* mouse pointer resting on the bar */}
      <svg viewBox="0 0 10 14" className="absolute top-[198px] left-[10px] h-[13px] w-[9px]" aria-hidden="true">
        <path d="M1 1v10l2.500-2 2 4 1.500-1-1.500-4H9z" fill="#fff" stroke="#333" strokeWidth="0.800" />
      </svg>
    </div>
  );
}

/* ---------- message window ---------- */

function Slant({ d, fill }: { d: string; fill: string }) {
  return (
    <svg viewBox="0 0 6 12" className="h-3 w-[6px] shrink-0" preserveAspectRatio="none" aria-hidden="true">
      <path d={d} fill={fill} stroke="#555" strokeWidth="1" />
    </svg>
  );
}

const STEPPERS = ["M3 3v10M13 3L6 8l7 5z", "M12 3L5 8l7 5z", "M5 3l7 5-7 5z", "M13 3v10M3 3l7 5-7 5z"];

function MessageWindow() {
  return (
    <section className="flex flex-col">
      <PanelTitle>Message Window</PanelTitle>
      <div className="flex h-10 justify-between border-t-2 border-l-2 border-[#8a8a8a] bg-[#fff9ef]">
        <span />
        <div className="flex w-[11px] flex-col items-center justify-between bg-[#ededed] py-1">
          <Ico className="h-[6px] w-[6px]">
            <path d="M2 11h12L8 4z" fill="#8a8a8a" />
          </Ico>
          <Ico className="h-[6px] w-[6px]">
            <path d="M2 5h12l-6 7z" fill="#8a8a8a" />
          </Ico>
        </div>
      </div>
      <div className="flex h-[14px] items-center border-t-2 border-[#9a9a9a] bg-[#fff9ef] pl-[3px] text-[8px] text-[#333]">
        <label htmlFor="command">&gt;&gt;</label>
        <input id="command" className="flex-1 bg-transparent pl-1 outline-none" />
      </div>
      <div className={clsx("flex h-3 items-center bg-[#f4f4f4] text-[8px] text-[#333]", ARIAL)}>
        <div className="flex pl-[2px]">
          {STEPPERS.map((d) => (
            <button key={d} type="button" aria-label="Scroll tabs" className="flex h-[11px] w-3 items-center justify-center border-r border-[#9a9a9a] bg-[#e6e6e6]">
              <Ico className="h-[7px] w-[7px]">
                <path d={d} fill="#8a8a8a" stroke="#8a8a8a" />
              </Ico>
            </button>
          ))}
        </div>
        <Slant d="M0 0l5 12" fill="#fff" />
        <button type="button" className="bg-white font-bold">
          Command Message
        </button>
        <Slant d="M6 0L1 12M2 6l3 6" fill="none" />
        <button type="button" className="px-1">
          Analysis Message
        </button>
        <Slant d="M6 0L1 12" fill="none" />
        <span className="h-3 flex-1 border-t border-[#777] bg-[#ececec]" />
        <div className="flex h-3 w-1/3 items-center justify-between border-l border-[#777] bg-[#f6f6f6]">
          <div className="flex">
            <button type="button" aria-label="Scroll left" className="flex h-[11px] w-[11px] items-center justify-center border border-[#bbb]">
              <Ico className="h-[7px] w-[7px]">
                <path d="M11 2L4 8l7 6z" fill="#111" />
              </Ico>
            </button>
            <span className="h-[11px] w-[10px] border-r border-b border-[#888]" />
          </div>
          <button type="button" aria-label="Scroll right" className="flex h-[11px] w-[11px] items-center justify-center border border-[#ccc]">
            <Ico className="h-[7px] w-[7px]">
              <path d="M5 2l7 6-7 6z" fill="#111" />
            </Ico>
          </button>
        </div>
      </div>
    </section>
  );
}

/* ---------- status bar ---------- */

function UnitSelect({ label, value, selected, width }: { label: string; value: string; selected?: boolean; width: string }) {
  return (
    <span className={clsx("relative flex h-3 items-center bg-white", width)}>
      <select aria-label={label} className={clsx("h-[10px] w-full appearance-none pl-px text-[8px]", selected ? "bg-[#3f8ce6] text-white" : "text-[#222]")}>
        <option>{value}</option>
      </select>
      <span className="pointer-events-none absolute right-0 flex h-full w-[10px] items-center justify-center bg-[#f0f0f0]">
        <Caret />
      </span>
    </span>
  );
}

function Spinner({ label, value, dim }: { label: string; value: string; dim?: boolean }) {
  return (
    <span className={clsx("flex h-3 w-7 items-center justify-between", dim ? "bg-[#d2d2d2]" : "bg-white")}>
      <input aria-label={label} defaultValue={value} className={clsx("w-4 bg-transparent text-center text-[8px]", dim ? "text-[#888]" : "text-[#222]")} />
      <Ico className="h-3 w-[10px] bg-[#dcdcdc]" box="0 0 10 12">
        <path d="M0 6h10" stroke="#8a8a8a" />
        <path d="M3 4h4L5 2zM3 8h4l-2 2z" fill="#555" />
      </Ico>
    </span>
  );
}

function StatusBar() {
  return (
    <footer className="flex h-4 items-center bg-linear-to-b from-[#33404d] to-[#111a26] pr-[30px] pl-2 text-[8px] text-[#d4d8dc]">
      <span className="flex-1">Top View</span>
      <span className="w-[68px]">None!</span>
      <span className="w-[108px]">U: -44725, -27862.36, 0</span>
      <span className="w-[107px]">G: -44725, -27862.36, 0</span>
      <UnitSelect label="Force unit" value="kN" width="w-8" />
      <span className="ml-1 flex">
        <UnitSelect label="Length unit" value="mm" selected width="w-[31px]" />
      </span>
      <span className="mx-1 flex gap-px">
        {["M8 2v12M2 8h12M5 5l6 6", "M4 2v12M8 5h6M8 10h6", "M5 3l8 5-8 5z"].map((d) => (
          <button key={d} type="button" aria-label="Step" className="flex h-3 w-[14px] items-center justify-center border-r border-[#999] bg-[#dcdcdc]">
            <Ico className="h-[10px] w-[10px]">
              <path d={d} stroke="#a0a0a0" strokeWidth="1.600" />
            </Ico>
          </button>
        ))}
      </span>
      <UnitSelect label="Filter" value="none" width="w-7" />
      <button type="button" className="ml-[6px] h-3 w-3 border border-[#3fb8b8] bg-white text-[8px] leading-[10px] font-bold text-[#333]">
        ?
      </button>
      <button type="button" aria-label="Colour" className="mx-[3px] h-3 w-[11px] bg-[#00f4f4]" />
      <Spinner label="Page" value="1" dim />
      <span className="bg-[#e6e6e6] px-1 leading-3 text-[#333]">/</span>
      <Spinner label="Pages" value="2" />
    </footer>
  );
}

/* ---------- page ---------- */

export default function App() {
  return (
    <div className={clsx("flex h-screen w-full flex-col overflow-hidden border-l-[3px] border-[#54595b] bg-[#1a1d21] pb-[2px]", UI)}>
      <Header />
      <div className="pr-[3px] pl-1">
        <Ribbon />
        <Toolbar />
      </div>
      <div className="flex min-h-0 flex-1 pr-[3px] pl-1">
        <TreePanel />
        <main className="ml-[6px] flex min-w-0 flex-1 flex-col pt-[3px]">
          <div className="relative min-h-0 flex-1 border-t-2 border-l-2 border-[#8a8a8a] bg-white">
            <BridgeModel />
            <StageBar />
            <ViewCube />
          </div>
          <div className="flex h-[14px] items-center border-t border-[#666] bg-[#e5e5e5] px-1 text-[8px] text-[#333]">
            <Ico className="h-[7px] w-[7px]">
              <path d="M11 2L5 8l6 6z" stroke="#666" />
            </Ico>
            <Slant d="M0 0l5 12" fill="#fff" />
            <button type="button" className="h-3 bg-white px-px font-bold">
              Model View
            </button>
            <Slant d="M6 0L1 12" fill="#fff" />
            <span className="flex-1" />
            <Ico className="h-[7px] w-[7px]">
              <path d="M5 2l6 6-6 6z" stroke="#666" />
            </Ico>
          </div>
          <div className="pt-[3px]">
            <MessageWindow />
          </div>
        </main>
        <div className="ml-[2px] flex">
          <SideToolbar />
        </div>
      </div>
      <StatusBar />
    </div>
  );
}
